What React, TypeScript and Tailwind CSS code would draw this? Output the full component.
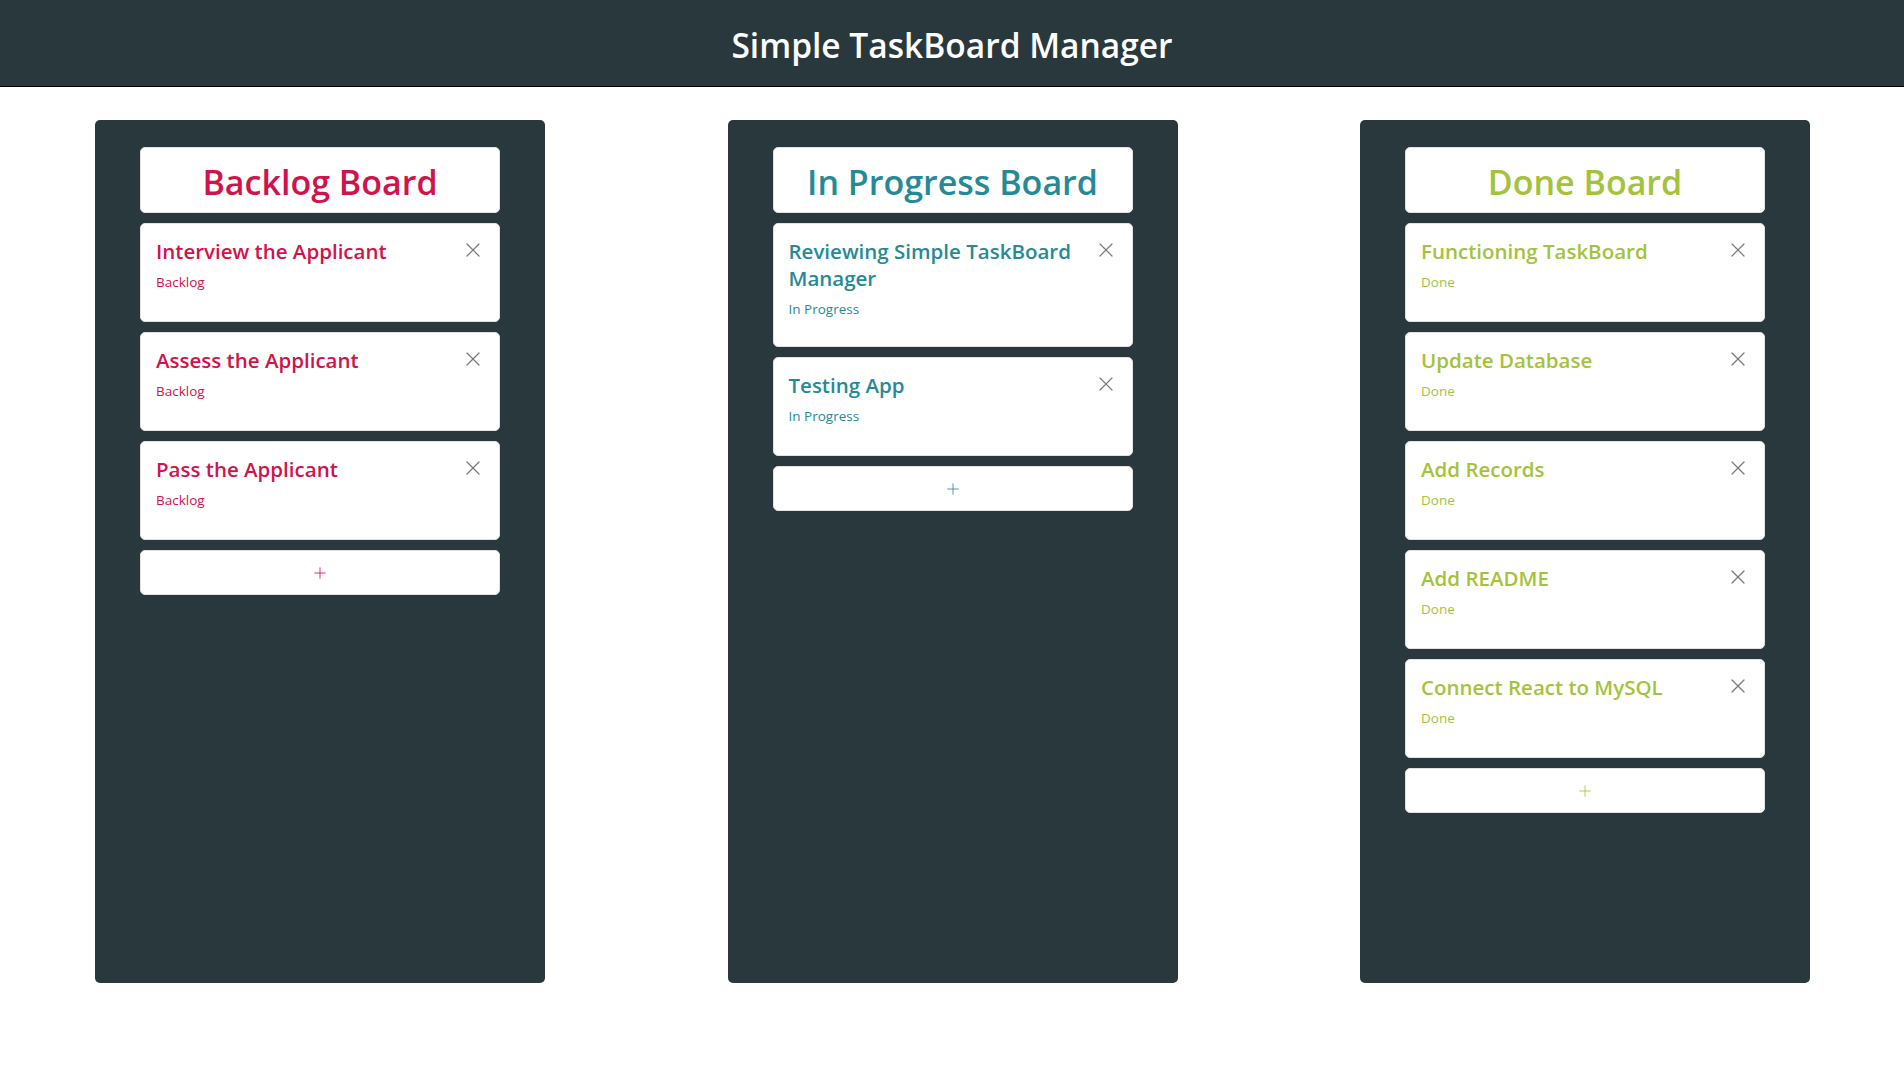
import { X, Plus } from "lucide-react";

type Task = { title: string };

type Board = {
  name: string;
  status: string;
  color: string;
  tasks: Task[];
};

const boards: Board[] = [
  {
    name: "Backlog Board",
    status: "Backlog",
    color: "text-[#d1124b]",
    tasks: [
      { title: "Interview the Applicant" },
      { title: "Assess the Applicant" },
      { title: "Pass the Applicant" },
    ],
  },
  {
    name: "In Progress Board",
    status: "In Progress",
    color: "text-[#268a96]",
    tasks: [{ title: "Reviewing Simple TaskBoard Manager" }, { title: "Testing App" }],
  },
  {
    name: "Done Board",
    status: "Done",
    color: "text-[#a5c23c]",
    tasks: [
      { title: "Functioning TaskBoard" },
      { title: "Update Database" },
      { title: "Add Records" },
      { title: "Add README" },
      { title: "Connect React to MySQL" },
    ],
  },
];

const TaskCard = ({ task, status, color }: { task: Task; status: string; color: string }) => (
  <div className="flex min-h-[99px] justify-between rounded-[5px] border border-[#e2e2e2] bg-white pl-[15px] pr-[14px] pt-[14px] pb-[28px]">
    <div className="pr-4">
      <h3 className={`text-[20.5px] font-semibold leading-[27px] ${color}`}>{task.title}</h3>
      <p className={`mt-[8px] text-[13.5px] leading-[18px] ${color}`}>{status}</p>
    </div>
    <button className="h-[24px] shrink-0 text-[#7a7a7a]" aria-label="Delete task">
      <X className="h-[24px] w-[24px]" strokeWidth={1.2} />
    </button>
  </div>
);

const BoardColumn = ({ board }: { board: Board }) => (
  <section className="flex h-[863px] w-[450px] flex-col gap-[10px] rounded-[5px] bg-[#29383c] px-[45px] pt-[27px]">
    <div className="flex h-[66px] items-center justify-center rounded-[5px] border border-[#e2e2e2] bg-white pt-[4px]">
      <h2 className={`text-[34px] font-semibold leading-none ${board.color}`}>{board.name}</h2>
    </div>
    {board.tasks.map((t) => (
      <TaskCard key={t.title} task={t} status={board.status} color={board.color} />
    ))}
    <button className={`flex h-[45px] items-center justify-center rounded-[5px] border border-[#e2e2e2] bg-white ${board.color}`}>
      <Plus className="h-[18px] w-[18px]" strokeWidth={1.1} />
    </button>
  </section>
);

export default function App() {
  return (
    <div className="min-h-screen bg-white font-['Open_Sans',sans-serif]">
      <header className="flex h-[87px] items-center justify-center border-b border-black bg-[#29383c] pt-[4px]">
        <h1 className="text-[33.5px] font-semibold text-white">Simple TaskBoard Manager</h1>
      </header>
      <main className="flex justify-between pl-[95px] pr-[94px] pt-[33px]">
        {boards.map((b) => (
          <BoardColumn key={b.name} board={b} />
        ))}
      </main>
    </div>
  );
}
